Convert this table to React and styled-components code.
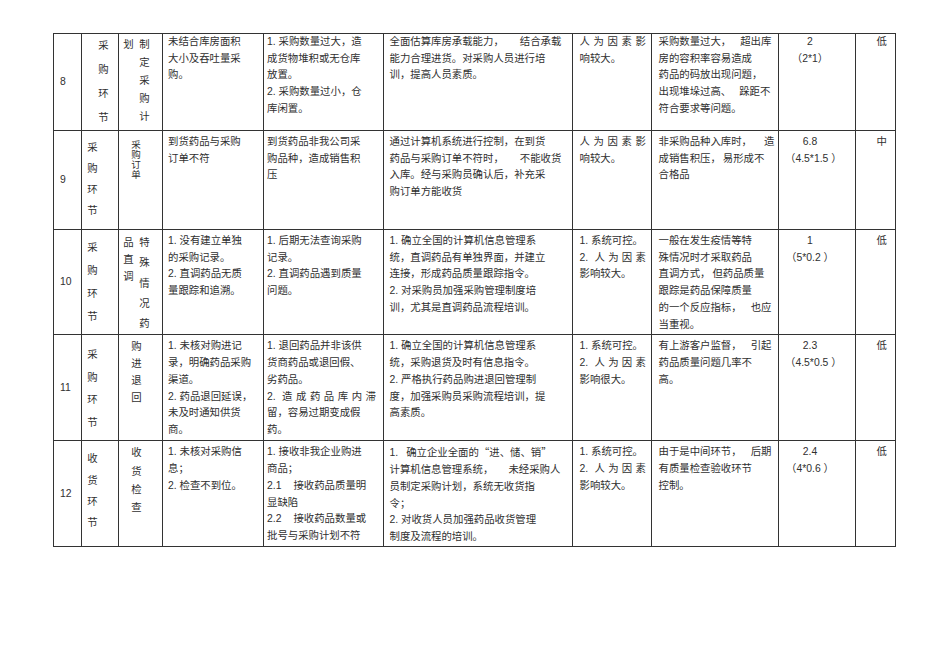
import React from 'react';
import styled, { createGlobalStyle } from 'styled-components';

const GlobalStyle = createGlobalStyle`
  html, body {
    margin: 0;
    background: #fff;
  }
  body {
    font-family: "Liberation Sans", "Noto Sans CJK SC", sans-serif;
    color: #2f2f2f;
  }
`;

const Page = styled.div`
  width: 950px;
  height: 672px;
  box-sizing: border-box;
  padding: 33px 0 0 53px;
`;

const Table = styled.table`
  border-collapse: collapse;
  table-layout: fixed;
  width: 842px;
  font-size: 10.4px;
  line-height: 16.7px;
`;

const Row = styled.tr`
  height: ${({ $h }) => $h}px;
`;

const Cell = styled.td`
  border: 1px solid #333;
  vertical-align: ${({ $middle }) => ($middle ? 'middle' : 'top')};
  text-align: ${({ $align }) => $align || 'left'};
  padding: ${({ $pt }) => $pt}px ${({ $pr }) => $pr ?? 4}px 0 ${({ $pl }) => $pl ?? 5}px;
  overflow: hidden;
`;

const Line = styled.div`
  white-space: ${({ $justify }) => ($justify ? 'normal' : 'nowrap')};
  text-align-last: ${({ $justify }) => ($justify ? 'justify' : 'auto')};
`;

const Gap = styled.span`
  display: inline-block;
  width: ${({ $w }) => $w}px;
`;

// full-width quotes come from the CJK face, not Liberation
const Quote = styled.span`
  font-family: "Noto Sans CJK SC", sans-serif;
`;

const StackGroup = styled.div`
  display: flex;
  align-items: flex-start;
  gap: ${({ $gap }) => $gap || 0}px;
`;

const Stack = styled.div`
  display: flex;
  flex-direction: column;
  align-items: center;
  width: 1.05em;
  margin-top: ${({ $mt }) => $mt || 0}px;
  font-size: ${({ $fs }) => $fs || 10.4}px;
  line-height: ${({ $lh }) => $lh}px;
`;

// "{n}" inserts an n px gap, a leading "=" justifies the line across the cell
const renderLine = (text, i) => {
  const justify = text.startsWith('=');
  const parts = (justify ? text.slice(1) : text).split(/(\{\d+\}|[“”])/);
  return (
    <Line key={i} $justify={justify}>
      {parts.map((p, j) => {
        if (/^\{\d+\}$/.test(p)) return <Gap key={j} $w={Number(p.slice(1, -1))} />;
        if (p === '“' || p === '”') return <Quote key={j}>{p}</Quote>;
        return p;
      })}
    </Line>
  );
};

const Vertical = ({ chars, lh, mt, fs }) => (
  <Stack $lh={lh} $mt={mt} $fs={fs}>
    {chars.split('').map((c, i) => <span key={i}>{c}</span>)}
  </Stack>
);

const rows = [
  {
    no: '8', h: 97, pt: 0,
    stage: { chars: '采购环节', lh: 24, mt: 0, pl: 16 },
    step: [{ chars: '划', lh: 18, mt: 2 }, { chars: '制定采购计', lh: 18, mt: 2 }],
    stepPl: 4,
    cause: ['未结合库房面积', '大小及吞吐量采', '购。'],
    effect: ['1. 采购数量过大，造', '成货物堆积或无仓库', '放置。', '2. 采购数量过小，仓', '库闲置。'],
    measure: ['全面估算库房承载能力，{16}结合承载', '能力合理进货。对采购人员进行培', '训，提高人员素质。'],
    factor: ['=人为因素影', '响较大。'],
    analysis: ['采购数量过大，{9}超出库', '房的容积率容易造成', '药品的码放出现问题，', '出现堆垛过高、{8}跺距不', '符合要求等问题。'],
    score: ['2', '（2*1）'],
    level: '低',
  },
  {
    no: '9', h: 99, pt: 3,
    stage: { chars: '采购环节', lh: 21, mt: 3, pl: 5 },
    step: [{ chars: '采购订单', lh: 10, mt: 6, fs: 9.5 }],
    stepPl: 12,
    cause: ['到货药品与采购', '订单不符'],
    effect: ['到货药品非我公司采', '购品种，造成销售积', '压'],
    measure: ['通过计算机系统进行控制，在到货', '药品与采购订单不符时，{16}不能收货', '入库。经与采购员确认后，补充采', '购订单方能收货'],
    factor: ['=人为因素影', '响较大。'],
    analysis: ['非采购品种入库时，{12}造', '成销售积压，{2}易形成不', '合格品'],
    score: ['6.8', '（4.5*1.5 ）'],
    level: '中',
  },
  {
    no: '10', h: 105, pt: 3,
    stage: { chars: '采购环节', lh: 23, mt: 3, pl: 5 },
    step: [{ chars: '品直调', lh: 17, mt: 1 }, { chars: '特殊情况药', lh: 20.3, mt: 0 }],
    stepPl: 4,
    cause: ['1. 没有建立单独', '的采购记录。', '2. 直调药品无质', '量跟踪和追溯。'],
    effect: ['1. 后期无法查询采购', '记录。', '2. 直调药品遇到质量', '问题。'],
    measure: ['1. 确立全国的计算机信息管理系', '统，直调药品有单独界面，并建立', '连接，形成药品质量跟踪指令。', '2. 对采购员加强采购管理制度培', '训，尤其是直调药品流程培训。'],
    factor: ['1. 系统可控。', '=2. 人为因素', '影响较大。'],
    analysis: ['一般在发生疫情等特', '殊情况时才采取药品', '直调方式，{2}但药品质量', '跟踪是药品保障质量', '的一个反应指标，{9}也应', '当重视。'],
    score: ['1', '（5*0.2 ）'],
    level: '低',
  },
  {
    no: '11', h: 106, pt: 3,
    stage: { chars: '采购环节', lh: 22.5, mt: 6, pl: 5 },
    step: [{ chars: '购进退回', lh: 17, mt: 0 }],
    stepPl: 12,
    cause: ['1. 未核对购进记', '录，明确药品采购', '渠道。', '2. 药品退回延误，', '未及时通知供货', '商。'],
    effect: ['1. 退回药品并非该供', '货商药品或退回假、', '劣药品。', '=2. 造成药品库内滞', '留，容易过期变成假', '药。'],
    measure: ['1. 确立全国的计算机信息管理系', '统，采购退货及时有信息指令。', '2. 严格执行药品购进退回管理制', '度，加强采购员采购流程培训，提', '高素质。'],
    factor: ['1. 系统可控。', '=2. 人为因素', '影响很大。'],
    analysis: ['有上游客户监督，{9}引起', '药品质量问题几率不', '高。'],
    score: ['2.3', '（4.5*0.5 ）'],
    level: '低',
  },
  {
    no: '12', h: 106, pt: 3,
    stage: { chars: '收货环节', lh: 21.3, mt: 4, pl: 5 },
    step: [{ chars: '收货检查', lh: 18.3, mt: 0 }],
    stepPl: 12,
    cause: ['1. 未核对采购信', '息；', '2. 检查不到位。'],
    effect: ['1. 接收非我企业购进', '商品；', '2.1{12}接收药品质量明', '显缺陷', '2.2{12}接收药品数量或', '批号与采购计划不符'],
    measure: ['1.{8}确立企业全面的“进、储、销”', '计算机信息管理系统，{15}未经采购人', '员制定采购计划，系统无收货指', '令；', '2. 对收货人员加强药品收货管理', '制度及流程的培训。'],
    factor: ['1. 系统可控。', '=2. 人为因素', '影响较大。'],
    analysis: ['由于是中间环节，{9}后期', '有质量检查验收环节', '控制。'],
    score: ['2.4', '（4*0.6 ）'],
    level: '低',
  },
];

const widths = [28, 37, 44, 101, 120, 189, 79, 127, 77, 40];

const App = () => (
  <Page>
    <GlobalStyle />
    <Table>
      <colgroup>
        {widths.map((w, i) => <col key={i} style={{ width: w }} />)}
      </colgroup>
      <tbody>
        {rows.map((r) => (
          <Row key={r.no} $h={r.h}>
            <Cell $pt={0} $pl={6} $middle>{r.no}</Cell>
            <Cell $pt={r.pt} $pl={r.stage.pl} $pr={0}>
              <Vertical chars={r.stage.chars} lh={r.stage.lh} mt={r.stage.mt} />
            </Cell>
            <Cell $pt={r.pt} $pl={r.stepPl} $pr={0}>
              <StackGroup $gap={5}>
                {r.step.map((s) => (
                  <Vertical key={s.chars} chars={s.chars} lh={s.lh} mt={s.mt} fs={s.fs} />
                ))}
              </StackGroup>
            </Cell>
            <Cell $pt={r.pt} $pl={5}>{r.cause.map(renderLine)}</Cell>
            <Cell $pt={r.pt} $pl={3} $pr={7}>{r.effect.map(renderLine)}</Cell>
            <Cell $pt={r.pt} $pl={5.5}>{r.measure.map(renderLine)}</Cell>
            <Cell $pt={r.pt} $pl={6.5} $pr={5}>{r.factor.map(renderLine)}</Cell>
            <Cell $pt={r.pt} $pl={6.5}>{r.analysis.map(renderLine)}</Cell>
            <Cell $pt={r.pt} $pl={6} $pr={20} $align="center">{r.score.map(renderLine)}</Cell>
            <Cell $pt={r.pt} $pr={8} $align="right">{r.level}</Cell>
          </Row>
        ))}
      </tbody>
    </Table>
  </Page>
);

export default App;
